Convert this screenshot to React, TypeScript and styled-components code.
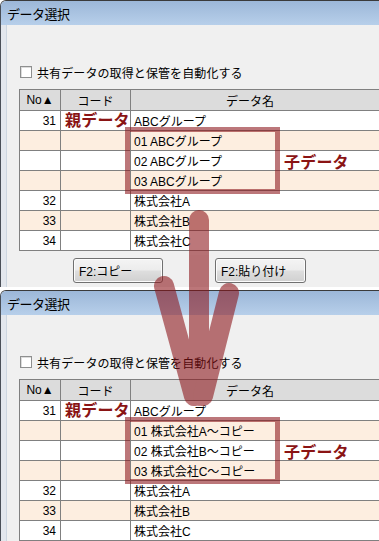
import { FC } from 'react'
import styled, { createGlobalStyle } from 'styled-components'

const GlobalStyle = createGlobalStyle`
  html, body {
    margin: 0;
    padding: 0;
    background: #ffffff;
  }
  body {
    font-family: 'Liberation Sans', 'Noto Sans CJK JP', sans-serif;
    font-size: 12px;
    color: #000000;
  }
`

const Page = styled.div`
  position: relative;
  width: 379px;
  height: 541px;
  overflow: hidden;
  background: #ffffff;
  display: flex;
  flex-direction: column;
  gap: 3px;
`

const WindowFrame = styled.section`
  flex: none;
  border-top: 1px solid #3a3a3a;
  border-left: 1px solid #4a4f57;
  border-top-left-radius: 6px;
  overflow: hidden;
  background: #f0f0f0;
`

const TitleBar = styled.header`
  height: 24px;
  display: flex;
  align-items: center;
  padding-left: 6px;
  background: linear-gradient(#9cb7d8, #b7cfea);
  font-size: 13px;
  letter-spacing: -0.5px;
`

const Body = styled.div`
  display: flex;
  flex-direction: column;
  align-items: flex-start;
  padding: 38px 0 4px 13px;
  border-left: 5px solid #e3e7ed;
  box-shadow: inset 1px 0 0 #cdd6e0;
`

const CheckRow = styled.label`
  height: 18px;
  display: flex;
  align-items: center;
  gap: 5px;
  padding-left: 1px;
  letter-spacing: 0.1px;
`

const CheckBox = styled.span`
  width: 12px;
  height: 12px;
  box-sizing: border-box;
  border: 1px solid #8e8f8f;
  background: #ffffff;
  box-shadow: inset 1px 1px 0 #dcdcdc;
`

const Table = styled.div`
  margin-top: 8px;
  width: 100%;
  border-top: 1px solid #808080;
  border-left: 1px solid #808080;
  background: #ffffff;
`

const HeadRow = styled.div`
  display: grid;
  grid-template-columns: 41px 70px 1fr;
  height: 21px;
  background: #dcdcdc;
`

const HeadCell = styled.div<{ $shift?: number }>`
  display: flex;
  align-items: center;
  justify-content: center;
  padding-right: ${p => p.$shift ?? 0}px;
  border-right: 1px solid #808080;
  border-bottom: 1px solid #808080;
  box-sizing: border-box;
`

const RowsArea = styled.div`
  position: relative;
`

const Row = styled.div<{ $odd: boolean }>`
  display: grid;
  grid-template-columns: 41px 70px 1fr;
  height: 20px;
  background: ${p => (p.$odd ? '#fdeee0' : '#ffffff')};
`

const Cell = styled.div<{ $align?: 'left' | 'right' }>`
  display: flex;
  align-items: center;
  justify-content: ${p => (p.$align === 'right' ? 'flex-end' : 'flex-start')};
  padding: ${p => (p.$align === 'right' ? '0 4px 0 0' : '0 0 0 3px')};
  border-right: 1px solid #808080;
  border-bottom: 1px solid #808080;
  box-sizing: border-box;
  white-space: nowrap;
`

const Note = styled.span<{ $left: number; $top: number }>`
  position: absolute;
  left: ${p => p.$left}px;
  top: ${p => p.$top}px;
  font-family: 'Noto Sans CJK JP', sans-serif;
  font-size: 16px;
  font-weight: 700;
  line-height: 20px;
  color: #8a1414;
  letter-spacing: 0.2px;
  z-index: 2;
`

const GroupBox = styled.div`
  position: absolute;
  left: 105px;
  top: 16px;
  width: 155px;
  height: 67px;
  box-sizing: border-box;
  border: 5px solid rgba(140, 20, 25, 0.58);
  z-index: 2;
`

const ButtonRow = styled.div`
  display: flex;
  gap: 52px;
  margin: 7px 0 0 54px;
`

const Button = styled.button<{ $w: number }>`
  width: ${p => p.$w}px;
  height: 25px;
  padding: 0 0 0 5px;
  text-align: left;
  font-family: 'Liberation Sans', 'Noto Sans CJK JP', sans-serif;
  font-size: 12px;
  color: #000000;
  border: 1px solid #707070;
  border-radius: 3px;
  background: linear-gradient(#f4f4f4, #ececec 48%, #dedede 52%, #d0d0d0);
  box-shadow: inset 0 0 0 1px #fcfcfc;
`

const ArrowLayer = styled.svg`
  position: absolute;
  left: 0;
  top: 0;
  pointer-events: none;
  z-index: 5;
`

type RowData = [string, string, string]

const baseRows = (kids: string[]): RowData[] => [
  ['31', '', 'ABCグループ'],
  ['', '', kids[0]],
  ['', '', kids[1]],
  ['', '', kids[2]],
  ['32', '', '株式会社A'],
  ['33', '', '株式会社B'],
  ['34', '', '株式会社C'],
]

const before = baseRows(['01 ABCグループ', '02 ABCグループ', '03 ABCグループ'])
const after = baseRows(['01 株式会社A～コピー', '02 株式会社B～コピー', '03 株式会社C～コピー'])

const DataWindow: FC<{ rows: RowData[]; buttons?: boolean }> = ({ rows, buttons }) => {
  return (
    <WindowFrame>
      <TitleBar>データ選択</TitleBar>
      <Body>
        <CheckRow>
          <CheckBox />
          共有データの取得と保管を自動化する
        </CheckRow>
        <Table>
          <HeadRow>
            <HeadCell>No▲</HeadCell>
            <HeadCell>コード</HeadCell>
            <HeadCell $shift={10}>データ名</HeadCell>
          </HeadRow>
          <RowsArea>
            {rows.map((r, i) => (
              <Row key={i} $odd={i % 2 === 1}>
                <Cell $align='right'>{r[0]}</Cell>
                <Cell>{r[1]}</Cell>
                <Cell>{r[2]}</Cell>
              </Row>
            ))}
            <Note $left={45} $top={-2}>親データ</Note>
            <GroupBox />
            <Note $left={264} $top={40}>子データ</Note>
          </RowsArea>
        </Table>
        {buttons && (
          <ButtonRow>
            <Button $w={90}>F2:コピー</Button>
            <Button $w={91}>F2:貼り付け</Button>
          </ButtonRow>
        )}
      </Body>
    </WindowFrame>
  )
}

const App: FC = () => {
  return (
    <>
      <GlobalStyle />
      <Page>
        <DataWindow rows={before} buttons />
        <DataWindow rows={after} />
        <ArrowLayer width={379} height={541} viewBox='0 0 379 541'>
          <g opacity={0.58} stroke='#8c1419' strokeWidth={20} strokeLinecap='round' fill='none'>
            <line x1={199} y1={220} x2={199} y2={396} />
            <line x1={164} y1={286} x2={194} y2={396} />
            <line x1={229} y1={293} x2={203} y2={396} />
          </g>
        </ArrowLayer>
      </Page>
    </>
  )
}

export default App
